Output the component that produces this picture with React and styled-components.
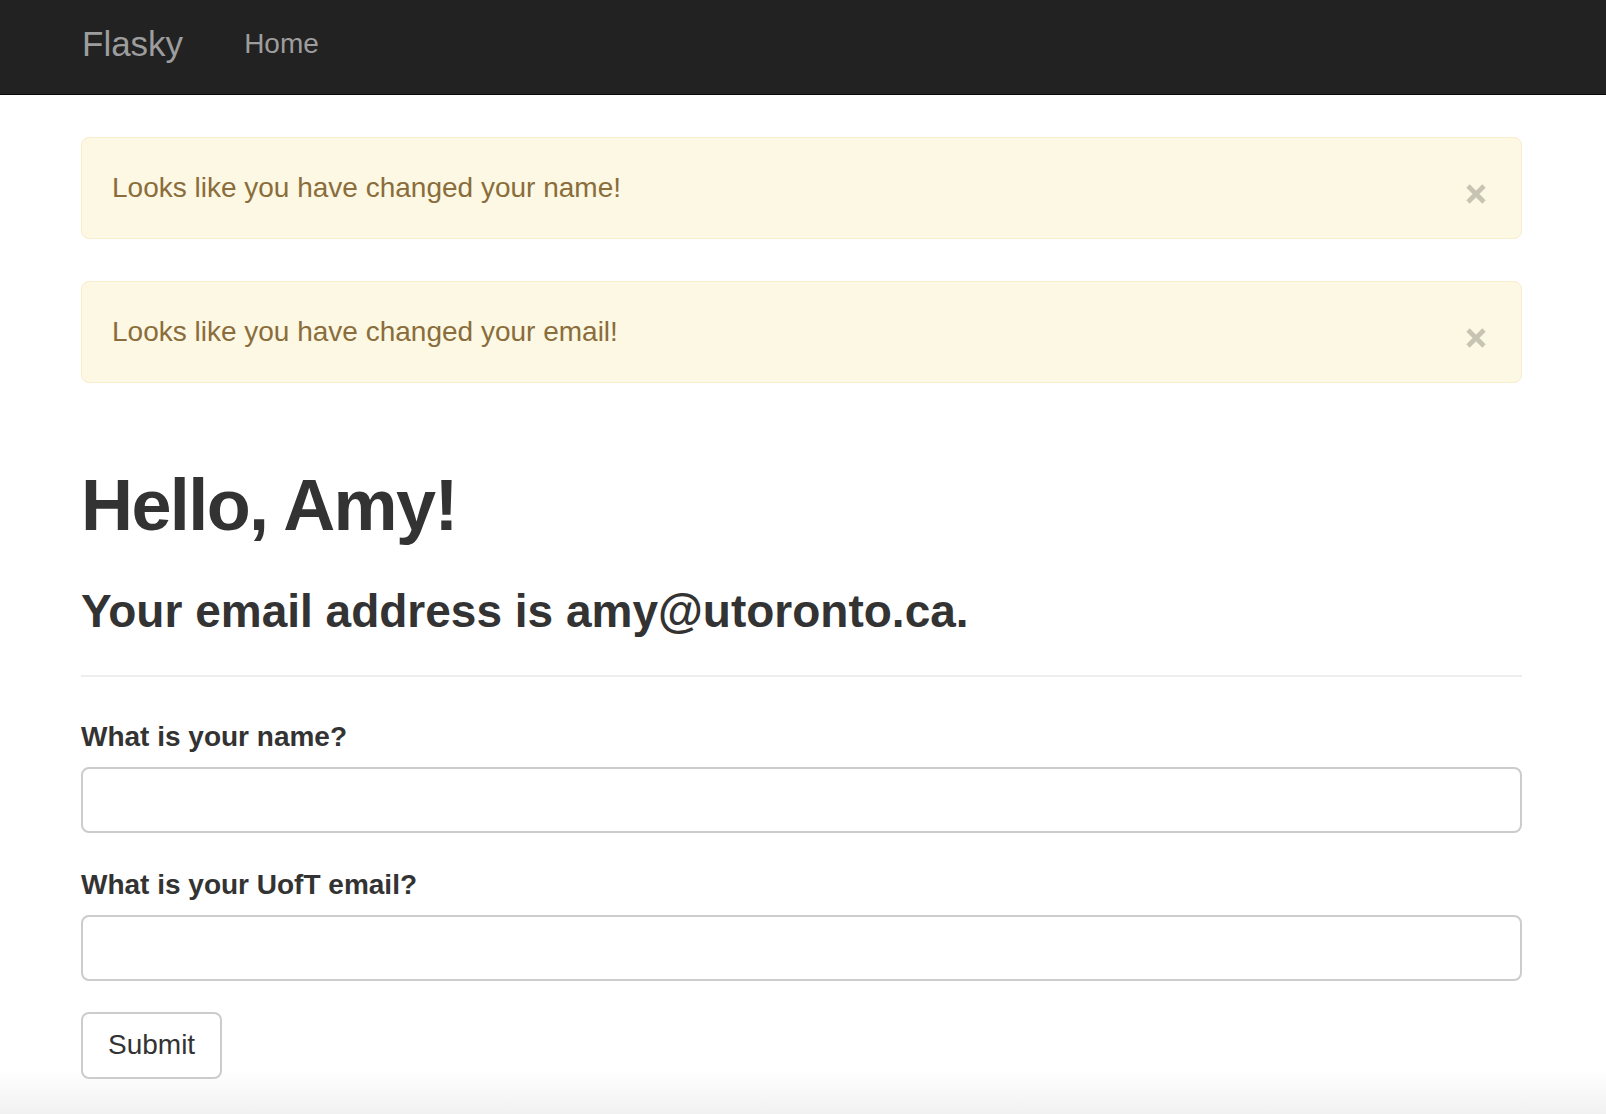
import React from 'react';
import styled, { createGlobalStyle } from 'styled-components';

const GlobalStyle = createGlobalStyle`
    html, body {
        margin: 0;
        padding: 0;
    }

    body {
        font-family: "Liberation Sans", Arial, Helvetica, sans-serif;
        color: #333333;
        background: #ffffff;
    }
`;

const Page = styled('div')`
    min-height: 100vh;
    background: linear-gradient(to bottom, #ffffff calc(100% - 44px), #f1f1f1 100%);
`;

const Navbar = styled('nav')`
    height: 94px;
    background: #222222;
    border-bottom: 1px solid #080808;
`;

const NavInner = styled('div')`
    display: flex;
    align-items: flex-start;
    gap: 61px;
    padding: 24px 84px 0 82px;
`;

const Brand = styled('a')`
    color: #9d9d9d;
    font-size: 35px;
    line-height: 40px;
    text-decoration: none;
`;

const NavLink = styled('a')`
    color: #9d9d9d;
    font-size: 28px;
    line-height: 40px;
    text-decoration: none;
`;

const Main = styled('main')`
    padding: 42px 84px 0 81px;
`;

const Alert = styled('div')`
    display: flex;
    align-items: flex-start;
    margin-bottom: 42px;
    padding: 30px 35px 30px 30px;
    background: #fcf8e3;
    border: 1px solid #faebcc;
    border-radius: 8px;
    color: #8a6d3b;
    font-size: 28px;
    line-height: 40px;
`;

const AlertText = styled('span')`
    flex: 1;
`;

const CloseButton = styled('button')`
    display: flex;
    margin-top: 16px;
    padding: 0;
    border: 0;
    background: transparent;
    cursor: pointer;
`;

const PageHeader = styled('div')`
    padding: 40px 0 38px;
    border-bottom: 2px solid #eeeeee;
`;

const Title = styled('h1')`
    margin: 0;
    font-size: 72px;
    font-weight: 700;
    line-height: 81px;
    letter-spacing: -1.6px;
`;

const Subtitle = styled('h3')`
    margin: 40px 0 0;
    font-size: 46px;
    font-weight: 700;
    line-height: 1.1;
`;

const Form = styled('form')`
    padding-top: 40px;
`;

const FormGroup = styled('div')`
    margin-bottom: ${props => props.spacing || '32px'};
`;

const Label = styled('label')`
    display: block;
    margin-bottom: 10px;
    font-size: 28px;
    font-weight: 700;
    line-height: 40px;
`;

const Input = styled('input')`
    display: block;
    box-sizing: border-box;
    width: 100%;
    height: 66px;
    padding: 0 24px;
    border: 2px solid #cccccc;
    border-radius: 8px;
    font-family: inherit;
    font-size: 28px;
    color: #555555;
    outline: none;
`;

const SubmitButton = styled('button')`
    box-sizing: border-box;
    height: 67px;
    padding: 0 25px;
    background: #ffffff;
    border: 2px solid #cccccc;
    border-radius: 8px;
    color: #333333;
    font-family: inherit;
    font-size: 28px;
    line-height: 40px;
    cursor: pointer;
`;

const CloseIcon = () => (
    <svg width="20" height="20" viewBox="0 0 20 20">
        <path d="M2 2 L18 18 M18 2 L2 18" stroke="#c7c4b4" strokeWidth="4.6" />
    </svg>
);

const messages = [
    'Looks like you have changed your name!',
    'Looks like you have changed your email!',
];

export default function App() {
    return (
        <Page>
            <GlobalStyle />
            <Navbar>
                <NavInner>
                    <Brand href="#">Flasky</Brand>
                    <NavLink href="#">Home</NavLink>
                </NavInner>
            </Navbar>
            <Main>
                {messages.map(message => (
                    <Alert key={message}>
                        <AlertText>{message}</AlertText>
                        <CloseButton type="button" aria-label="Close">
                            <CloseIcon />
                        </CloseButton>
                    </Alert>
                ))}
                <PageHeader>
                    <Title>Hello, Amy!</Title>
                    <Subtitle>Your email address is amy@utoronto.ca.</Subtitle>
                </PageHeader>
                <Form onSubmit={e => e.preventDefault()}>
                    <FormGroup>
                        <Label htmlFor="name">What is your name?</Label>
                        <Input id="name" type="text" />
                    </FormGroup>
                    <FormGroup spacing="31px">
                        <Label htmlFor="email">What is your UofT email?</Label>
                        <Input id="email" type="text" />
                    </FormGroup>
                    <SubmitButton type="submit">Submit</SubmitButton>
                </Form>
            </Main>
        </Page>
    );
}
